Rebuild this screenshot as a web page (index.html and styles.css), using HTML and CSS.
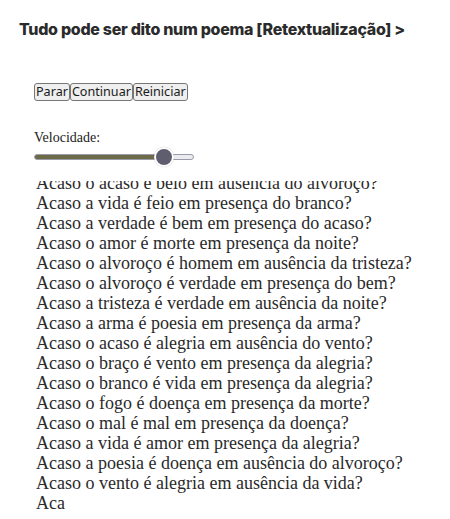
FILE: index.html
```html
<!DOCTYPE html>
<html lang="pt">
<head>
<meta charset="utf-8">
<title>Tudo pode ser dito num poema</title>
<link rel="stylesheet" href="styles.css">
</head>
<body>
<h3 class="title">Tudo pode ser dito num poema [Retextualização] &gt;</h3>
<div class="panel">
  <div class="controls"><button class="btn">Parar</button><button class="btn">Continuar</button><button class="btn">Reiniciar</button></div>
  <label class="speed-label">Velocidade:</label>
  <input class="speed" type="range" min="0" max="100" value="86">
  <div class="poem">
    <div class="poem-inner">
      <div>Acaso o acaso é belo em ausência do alvoroço?</div>
      <div>Acaso a vida é feio em presença do branco?</div>
      <div>Acaso a verdade é bem em presença do acaso?</div>
      <div>Acaso o amor é morte em presença da noite?</div>
      <div>Acaso o alvoroço é homem em ausência da tristeza?</div>
      <div>Acaso o alvoroço é verdade em presença do bem?</div>
      <div>Acaso a tristeza é verdade em ausência da noite?</div>
      <div>Acaso a arma é poesia em presença da arma?</div>
      <div>Acaso o acaso é alegria em ausência do vento?</div>
      <div>Acaso o braço é vento em presença da alegria?</div>
      <div>Acaso o branco é vida em presença da alegria?</div>
      <div>Acaso o fogo é doença em presença da morte?</div>
      <div>Acaso o mal é mal em presença da doença?</div>
      <div>Acaso a vida é amor em presença da alegria?</div>
      <div>Acaso a poesia é doença em ausência do alvoroço?</div>
      <div>Acaso o vento é alegria em ausência da vida?</div>
      <div>Aca</div>
    </div>
  </div>
</div>
</body>
</html>
```
FILE: styles.css
```css
html, body {
  margin: 0;
  padding: 0;
  background: #ffffff;
}
body {
  width: 450px;
  height: 519px;
  overflow: hidden;
}
.title {
  margin: 0;
  padding: 19px 0 0 19px;
  font-family: Inter, Roboto, "Liberation Sans", sans-serif;
  font-weight: 800;
  font-size: 16px;
  line-height: 20px;
  color: #2b2b2b;
  letter-spacing: -0.3px;
}
.panel {
  padding: 44px 0 0 34px;
  display: flex;
  flex-direction: column;
  align-items: flex-start;
}
.controls {
  display: flex;
}
.btn {
  font-family: "Noto Sans", "Open Sans", sans-serif;
  font-size: 12.6px;
  line-height: 14px;
  height: 18px;
  padding: 0 1px;
  margin: 0;
  color: #1a1a1a;
  background: #efefef;
  border: 1px solid #767676;
  border-radius: 3px;
}
.speed-label {
  margin-top: 29px;
  font-family: "Liberation Serif", "DejaVu Serif", serif;
  font-size: 14px;
  line-height: 16px;
  color: #222;
}
.speed {
  -webkit-appearance: none;
  appearance: none;
  margin: 1px 0 0 0;
  width: 160px;
  height: 20px;
  background: transparent;
}
.speed::-webkit-slider-runnable-track {
  height: 6px;
  border-radius: 3px;
  box-sizing: border-box;
  border: 1px solid #9a9aa8;
  background: linear-gradient(to right, #6c6a48 0%, #6c6a48 82%, #ebebf2 82%, #ebebf2 100%);
}
.speed::-webkit-slider-thumb {
  -webkit-appearance: none;
  appearance: none;
  width: 20px;
  height: 20px;
  margin-top: -8px;
  border-radius: 50%;
  background: #5e5e6e;
  border: 2px solid #ffffff;
  box-sizing: border-box;
  box-shadow: 0 0 1px rgba(0,0,0,0.3);
}
.poem {
  margin: 14px 0 0 2px;
  height: 332px;
  overflow: hidden;
  display: flex;
  flex-direction: column;
  justify-content: flex-end;
}
.poem-inner {
  font-family: "Liberation Serif", "Times New Roman", serif;
  font-size: 18px;
  line-height: 20px;
  color: #2a2a2a;
  white-space: nowrap;
}
```
